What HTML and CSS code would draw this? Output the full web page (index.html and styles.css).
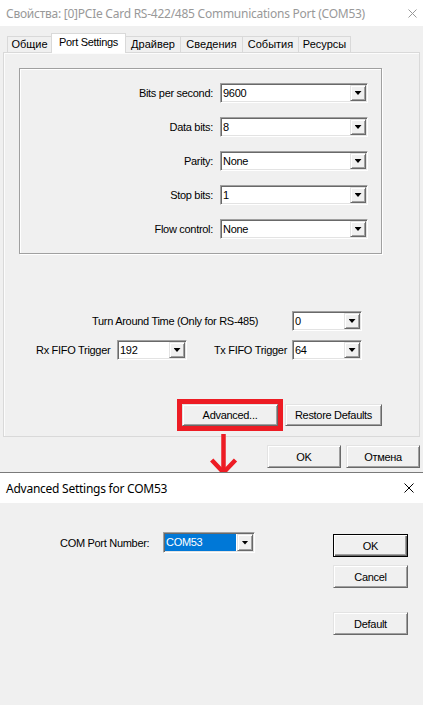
FILE: index.html
```html
<!DOCTYPE html>
<html lang="ru">
<head>
  <meta charset="UTF-8">
  <meta name="viewport" content="width=device-width, initial-scale=1.0">
  <title>Port Settings</title>
  <link rel="stylesheet" href="styles.css">
</head>
<body>

<div class="screen">

  <div class="props">
    <div class="titlebar inactive">
      <span class="title">Свойства: [0]PCIe Card RS-422/485 Communications Port (COM53)</span>
      <svg class="close" width="9" height="9" viewBox="0 0 9 9"><path d="M0.5 0.5L8.5 8.5M8.5 0.5L0.5 8.5" stroke="#999" stroke-width="1"/></svg>
    </div>

    <div class="props-body">
      <div class="tabs">
        <div class="tab">Общие</div>
        <div class="tab active">Port Settings</div>
        <div class="tab">Драйвер</div>
        <div class="tab">Сведения</div>
        <div class="tab">События</div>
        <div class="tab">Ресурсы</div>
      </div>

      <div class="panel">
        <div class="group">
          <div class="field">
            <label>Bits per second:</label>
            <div class="combo"><span class="combo-value">9600</span><span class="drop"></span></div>
          </div>
          <div class="field">
            <label>Data bits:</label>
            <div class="combo"><span class="combo-value">8</span><span class="drop"></span></div>
          </div>
          <div class="field">
            <label>Parity:</label>
            <div class="combo"><span class="combo-value">None</span><span class="drop"></span></div>
          </div>
          <div class="field">
            <label>Stop bits:</label>
            <div class="combo"><span class="combo-value">1</span><span class="drop"></span></div>
          </div>
          <div class="field">
            <label>Flow control:</label>
            <div class="combo"><span class="combo-value">None</span><span class="drop"></span></div>
          </div>
        </div>

        <div class="extra">
          <div class="turn-row">
            <span class="lbl-turn">Turn Around Time (Only for RS-485)</span>
            <div class="combo small"><span class="combo-value">0</span><span class="drop"></span></div>
          </div>
          <div class="fifo-row">
            <span class="lbl-rx">Rx FIFO Trigger</span>
            <div class="combo small"><span class="combo-value">192</span><span class="drop"></span></div>
            <span class="lbl-tx">Tx FIFO Trigger</span>
            <div class="combo small"><span class="combo-value">64</span><span class="drop"></span></div>
          </div>
        </div>

        <div class="actions">
          <button class="btn btn-adv marked">Advanced...</button>
          <button class="btn btn-restore">Restore Defaults</button>
        </div>
      </div>

      <div class="footer">
        <button class="btn btn-wide">OK</button>
        <button class="btn btn-wide">Отмена</button>
      </div>
    </div>
  </div>

  <svg class="arrow" width="32" height="44" viewBox="0 0 32 44">
    <path d="M15.5 2V40" stroke="#ed1c24" stroke-width="4.5" fill="none"/>
    <path d="M3.7 28L15.5 40.5L27.5 28" stroke="#ed1c24" stroke-width="4.5" fill="none"/>
  </svg>

  <div class="dialog">
    <div class="titlebar">
      <span class="title">Advanced Settings for COM53</span>
      <svg class="close" width="10" height="10" viewBox="0 0 10 10"><path d="M0.5 0.5L9.5 9.5M9.5 0.5L0.5 9.5" stroke="#000" stroke-width="1"/></svg>
    </div>
    <div class="dialog-body">
      <div class="com-row">
        <label>COM Port Number:</label>
        <div class="combo com"><span class="combo-value selected">COM53</span><span class="drop"></span></div>
      </div>
      <div class="side">
        <button class="btn btn-wide btn-default">OK</button>
        <button class="btn btn-wide btn-cancel">Cancel</button>
        <button class="btn btn-wide btn-reset">Default</button>
      </div>
    </div>
  </div>

</div>

</body>
</html>
```

FILE: styles.css
```css
* {
  box-sizing: border-box;
  margin: 0;
  padding: 0;
}

html, body {
  width: 423px;
  height: 705px;
  overflow: hidden;
  background: #f0f0f0;
  font-family: "Liberation Sans", Arial, sans-serif;
  font-size: 11px;
  letter-spacing: -0.3px;
  color: #000;
}

.screen {
  position: relative;
  height: 705px;
}

/* window title bars */
.titlebar {
  display: flex;
  align-items: center;
  height: 26px;
  padding: 0 6px;
  background: #fff;
  font-family: "Noto Sans", "Open Sans", sans-serif;
  font-size: 12px;
  letter-spacing: -0.25px;
  white-space: nowrap;
}

.titlebar.inactive {
  color: #999;
}

.titlebar .close {
  margin-left: auto;
  flex-shrink: 0;
}

/* property sheet */
.props {
  height: 472px;
  overflow: hidden;
}

.props-body {
  padding: 7px 3px 0 3px;
}

.tabs {
  position: relative;
  z-index: 1;
  display: flex;
  align-items: flex-end;
  height: 20px;
  margin-bottom: -1px;
  padding-left: 5px;
}

.tab {
  height: 16px;
  margin-bottom: 1px;
  margin-left: -1px;
  border: 1px solid #d9d9d9;
  border-bottom: none;
  background: #f0f0f0;
  line-height: 15px;
  letter-spacing: 0;
  text-align: center;
  white-space: nowrap;
}

.tab:nth-child(1) { width: 45px; }
.tab:nth-child(2) { width: 75px; }
.tab:nth-child(3) { width: 56px; }
.tab:nth-child(4) { width: 63px; }
.tab:nth-child(5) { width: 57px; }
.tab:nth-child(6) { width: 53px; }

.tab.active {
  position: relative;
  height: 20px;
  margin-bottom: 0;
  padding-top: 1px;
  background: #fff;
  line-height: 14px;
  letter-spacing: -0.3px;
}

.panel {
  height: 385px;
  border: 1px solid #d9d9d9;
  box-shadow: inset 1px 1px #fcfcfc;
  background: #f0f0f0;
  display: flex;
  flex-direction: column;
}

.group {
  width: 363px;
  height: 186px;
  margin: 15px 0 0 15px;
  padding: 14px 13px 14px 0;
  border: 1px solid #a0a0a0;
  box-shadow: inset 1px 1px #fff, 1px 1px #fff;
  display: flex;
  flex-direction: column;
  gap: 14px;
}

.field {
  display: flex;
  align-items: center;
  height: 20px;
}

.field label {
  width: 193px;
  margin-right: 7px;
  text-align: right;
}

/* combo box */
.combo {
  display: flex;
  width: 148px;
  height: 20px;
  border: 1px solid;
  border-color: #a0a0a0 #fff #fff #a0a0a0;
  box-shadow: inset 1px 1px #696969, inset -1px -1px #e3e3e3;
  background: #fff;
}

.combo.small {
  width: 70px;
}

.combo-value {
  flex: 1;
  padding-left: 2px;
  line-height: 18px;
}

.drop {
  width: 16px;
  margin: 1px;
  display: flex;
  align-items: center;
  justify-content: center;
  background: #f0f0f0;
  border: 1px solid;
  border-color: #e3e3e3 #696969 #696969 #e3e3e3;
  box-shadow: inset 1px 1px #fff, inset -1px -1px #a0a0a0;
}

.drop::before {
  content: "";
  width: 7px;
  height: 4px;
  background: #000;
  clip-path: polygon(0 0, 100% 0, 50% 100%);
}

.extra {
  margin-top: 57px;
  display: flex;
  flex-direction: column;
  gap: 9px;
}

.turn-row {
  display: flex;
  align-items: center;
  padding-left: 88px;
}

.lbl-turn {
  width: 200px;
}

.fifo-row {
  display: flex;
  align-items: center;
  padding-left: 32px;
}

.lbl-rx {
  width: 81px;
}

.lbl-tx {
  width: 105px;
  padding-right: 5px;
  text-align: right;
}

/* buttons */
.btn {
  height: 22px;
  font-family: inherit;
  font-size: 11px;
  letter-spacing: -0.3px;
  color: #000;
  background: #f0f0f0;
  border: 1px solid;
  border-color: #e3e3e3 #696969 #696969 #e3e3e3;
  box-shadow: inset 1px 1px #fff, inset -1px -1px #a0a0a0;
  cursor: pointer;
}

.actions {
  margin-top: 44px;
  padding-right: 37px;
  display: flex;
  justify-content: flex-end;
  gap: 7px;
}

.btn-adv {
  width: 96px;
}

.btn-restore {
  width: 97px;
}

.marked {
  outline: 5px solid #ed1c24;
}

.footer {
  margin-top: 8px;
  display: flex;
  justify-content: flex-end;
  gap: 5px;
}

.btn-wide {
  width: 74px;
  height: 23px;
}

/* red pointer */
.arrow {
  position: absolute;
  left: 208px;
  top: 432px;
  z-index: 1;
}

/* advanced settings dialog */
.dialog {
  position: relative;
  z-index: 2;
  height: 233px;
  border-top: 1px solid #7a7a7a;
  background: #f0f0f0;
}

.dialog .titlebar {
  height: 30px;
  padding: 0 9px 0 6px;
}

.dialog-body {
  display: flex;
  align-items: flex-start;
  padding-top: 29px;
}

.com-row {
  display: flex;
  align-items: center;
  height: 21px;
  padding-left: 60px;
}

.com-row label {
  width: 103px;
}

.combo.com {
  width: 92px;
  height: 21px;
}

.combo-value.selected {
  margin: 1px 0 1px 1px;
  padding-left: 1px;
  line-height: 17px;
  background: #0078d7;
  color: #fff;
}

.side {
  margin: 2px 15px 0 auto;
  display: flex;
  flex-direction: column;
}

.side .btn {
  width: 75px;
}

.btn-default {
  border: 1px solid #000;
  box-shadow: inset 1px 1px #fff, inset -1px -1px #696969, inset -2px -2px #a0a0a0;
}

.btn-cancel {
  margin-top: 8px;
}

.btn-reset {
  margin-top: 24px;
}
```
